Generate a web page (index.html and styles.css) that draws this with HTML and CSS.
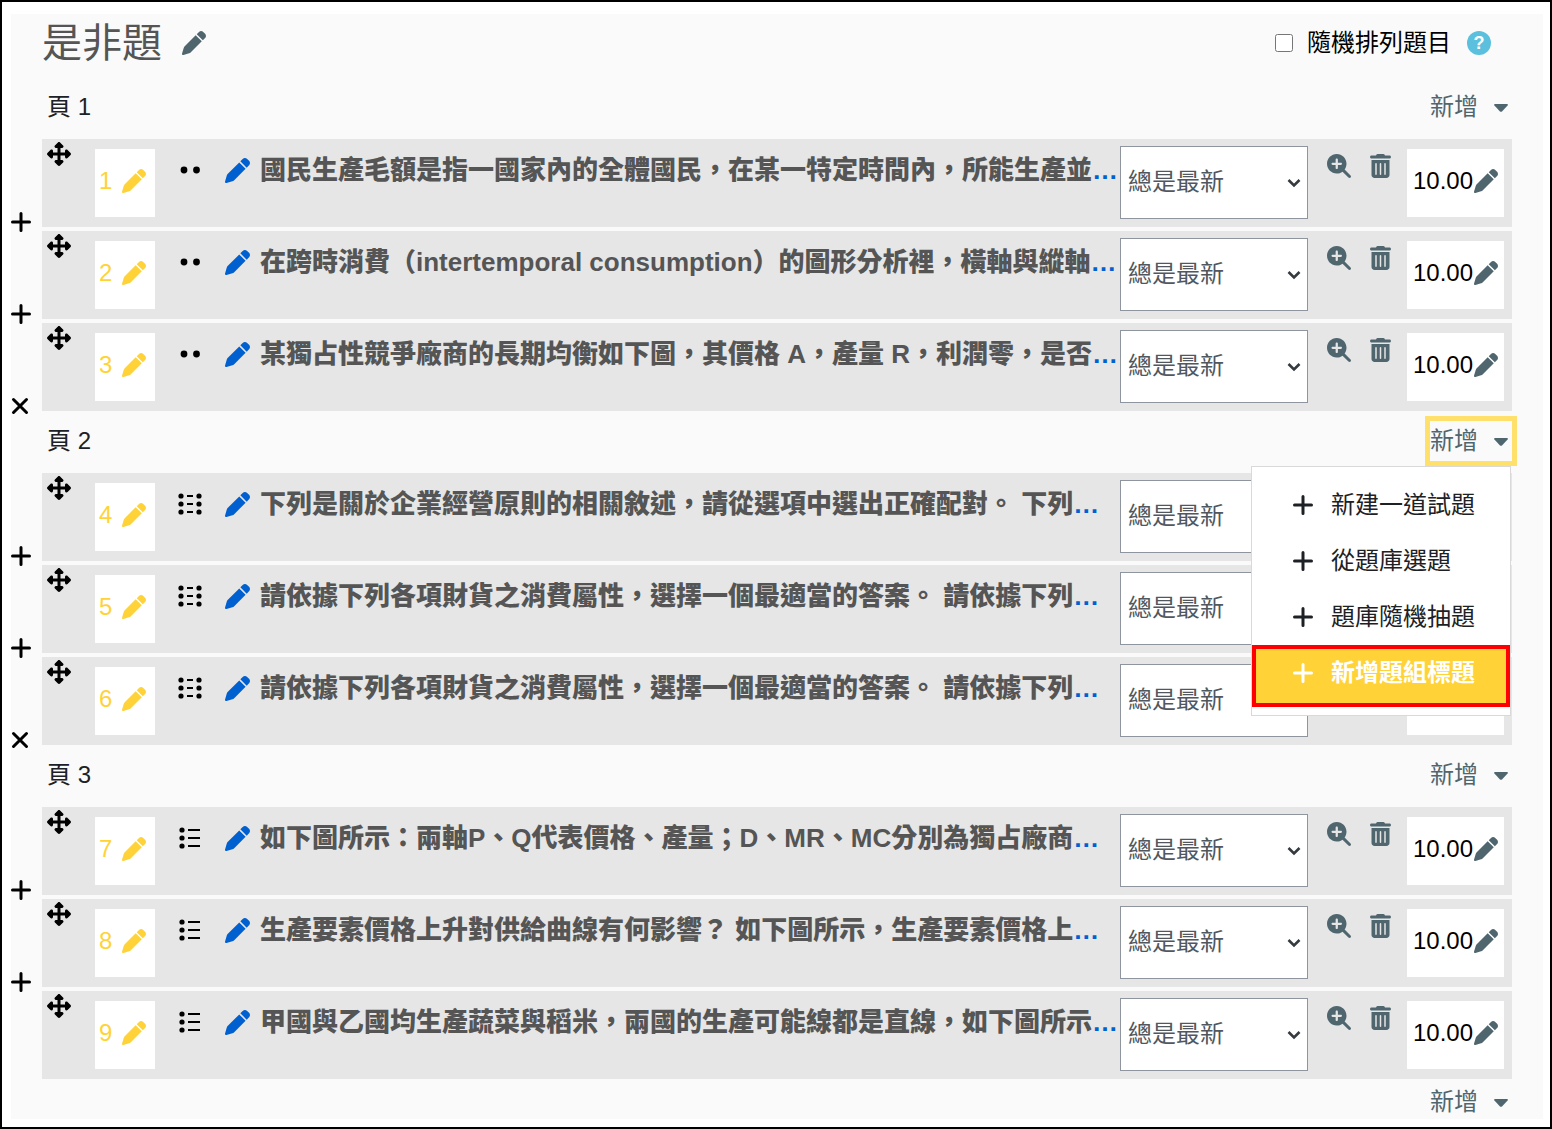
FILE: index.html
```html
<!DOCTYPE html>
<html lang="zh-Hant">
<head>
<meta charset="utf-8">
<title>是非題</title>
<link rel="stylesheet" href="styles.css">
</head>
<body>
<svg class="sprite" aria-hidden="true">
  <symbol id="pen" viewBox="0 0 512 512"><path d="M362.7 19.3L314.3 67.7 444.3 197.7l48.4-48.4c25-25 25-65.5 0-90.5L453.3 19.3c-25-25-65.5-25-90.5 0zm-71 71L58.6 323.5c-10.4 10.4-18 23.3-22.2 37.4L1 481.2C-1.5 489.7 .8 498.8 7 505s15.3 8.5 23.7 6.1l120.3-35.4c14.1-4.2 27-11.8 37.4-22.2L421.7 220.3 291.7 90.3z"/></symbol>
  <symbol id="zoom" viewBox="0 0 512 512"><path d="M416 208c0 45.9-14.9 88.3-40 122.7L502.6 457.4c12.5 12.5 12.5 32.8 0 45.3s-32.8 12.5-45.3 0L330.7 376c-34.4 25.2-76.8 40-122.7 40C93.1 416 0 322.9 0 208S93.1 0 208 0S416 93.1 416 208zM184 296c0 13.3 10.7 24 24 24s24-10.7 24-24V232h64c13.3 0 24-10.7 24-24s-10.7-24-24-24H232V120c0-13.3-10.7-24-24-24s-24 10.7-24 24v64H120c-13.3 0-24 10.7-24 24s10.7 24 24 24h64v64z"/></symbol>
  <symbol id="trash" viewBox="0 0 448 512"><path d="M135.2 17.7C140.6 6.8 151.7 0 163.8 0H284.2c12.1 0 23.2 6.8 28.6 17.7L320 32h96c17.7 0 32 14.3 32 32s-14.3 32-32 32H32C14.3 96 0 81.7 0 64S14.3 32 32 32h96l7.2-14.3zM32 128H416V448c0 35.3-28.7 64-64 64H96c-35.3 0-64-28.7-64-64V128zm96 64c-8.8 0-16 7.2-16 16V432c0 8.8 7.2 16 16 16s16-7.2 16-16V208c0-8.8-7.2-16-16-16zm96 0c-8.8 0-16 7.2-16 16V432c0 8.8 7.2 16 16 16s16-7.2 16-16V208c0-8.8-7.2-16-16-16zm96 0c-8.8 0-16 7.2-16 16V432c0 8.8 7.2 16 16 16s16-7.2 16-16V208c0-8.8-7.2-16-16-16z"/></symbol>
  <symbol id="move" viewBox="0 0 512 512"><path d="M278.6 9.4c-12.5-12.5-32.8-12.5-45.3 0l-64 64c-9.2 9.2-11.9 22.9-6.9 34.9s16.6 19.8 29.6 19.8h32v96H128V192c0-12.9-7.8-24.6-19.8-29.6s-25.7-2.2-34.9 6.9l-64 64c-12.5 12.5-12.5 32.8 0 45.3l64 64c9.2 9.2 22.9 11.9 34.9 6.9s19.8-16.6 19.8-29.6V288h96v96H192c-12.9 0-24.6 7.8-29.6 19.8s-2.2 25.7 6.9 34.9l64 64c12.5 12.5 32.8 12.5 45.3 0l64-64c9.2-9.2 11.9-22.9 6.9-34.9s-16.6-19.8-29.6-19.8H288V288h96v32c0 12.9 7.8 24.6 19.8 29.6s25.7 2.2 34.9-6.9l64-64c12.5-12.5 12.5-32.8 0-45.3l-64-64c-9.2-9.2-22.9-11.9-34.9-6.9s-19.8 16.6-19.8 29.6v32H288V128h32c12.9 0 24.6-7.8 29.6-19.8s2.2-25.7-6.9-34.9l-64-64z"/></symbol>
  <symbol id="plus" viewBox="0 0 20 20"><path d="M10 1.500v17M1.500 10h17" fill="none" stroke="currentColor" stroke-width="3" stroke-linecap="round"/></symbol>
  <symbol id="cross" viewBox="0 0 20 20"><path d="M2.500 3.500l13 13M15.500 3.500l-13 13" fill="none" stroke="currentColor" stroke-width="3" stroke-linecap="round"/></symbol>
  <symbol id="caret" viewBox="0 0 14 8"><path d="M1 0h12q1.4 .4 .6 1.6L8 7.4q-1 .8-2 0L.4 1.6Q-.4 .4 1 0z"/></symbol>
  <symbol id="chevron" viewBox="0 0 14 10"><path d="M1.500 2l5.500 5.500 5.500-5.500" fill="none" stroke="currentColor" stroke-width="2.6"/></symbol>
  <symbol id="truefalse" viewBox="0 0 24 24"><circle cx="6" cy="12" r="3.4"/><circle cx="18.500" cy="12" r="3.400"/></symbol>
  <symbol id="match" viewBox="0 0 24 24"><circle cx="3" cy="4" r="2.6"/><circle cx="3" cy="12" r="2.6"/><circle cx="3" cy="20" r="2.6"/><circle cx="21" cy="4" r="2.6"/><circle cx="21" cy="12" r="2.6"/><circle cx="21" cy="20" r="2.6"/><path d="M9 3h6v2H9zM9 11h6v2H9zM9 19h6v2H9z"/></symbol>
  <symbol id="multichoice" viewBox="0 0 24 24"><circle cx="4" cy="4" r="2.6"/><circle cx="4" cy="12" r="2.6"/><circle cx="4" cy="20" r="2.6"/><path d="M10 3h12v2H10zM10 11h12v2H10zM10 19h12v2H10z"/></symbol>
</svg>

<main class="frame">
<section class="quiz">
  <header class="quiz-head">
    <h1>是非題</h1>
    <button class="icon-btn" aria-label="編輯標題"><svg class="i"><use href="#pen"/></svg></button>
    <div class="shuffle">
      <input type="checkbox" id="shuffle"><label for="shuffle">隨機排列題目</label>
      <button class="help">?</button>
    </div>
  </header>

  <div class="page-head"><h2>頁 1</h2><button class="add">新增<svg><use href="#caret"/></svg></button></div>
  <ul class="questions">
    <li>
      <button class="split" aria-label="新增分頁"><svg><use href="#plus"/></svg></button>
      <div class="question">
        <button class="move" aria-label="移動"><svg class="i"><use href="#move"/></svg></button>
        <a class="number" href="#q1">1<svg class="i"><use href="#pen"/></svg></a>
        <div class="name"><svg class="i"><use href="#truefalse"/></svg><a href="#q1"><svg class="i"><use href="#pen"/></svg><span><b>國民生產毛額是指一國家內的全體國民，在某一特定時間內，所能生產並</b>…</span></a></div>
        <div class="version"><select aria-label="版本"><option>總是最新</option></select><svg><use href="#chevron"/></svg></div>
        <div class="tools"><button class="icon-btn" aria-label="預覽"><svg class="i"><use href="#zoom"/></svg></button><button class="icon-btn" aria-label="刪除"><svg class="i trash"><use href="#trash"/></svg></button></div>
        <a class="score" href="#q1">10.00<svg class="i"><use href="#pen"/></svg></a>
      </div>
    </li>
    <li>
      <button class="split" aria-label="新增分頁"><svg><use href="#plus"/></svg></button>
      <div class="question">
        <button class="move" aria-label="移動"><svg class="i"><use href="#move"/></svg></button>
        <a class="number" href="#q2">2<svg class="i"><use href="#pen"/></svg></a>
        <div class="name"><svg class="i"><use href="#truefalse"/></svg><a href="#q2"><svg class="i"><use href="#pen"/></svg><span><b>在跨時消費（intertemporal consumption）的圖形分析裡，橫軸與縱軸</b>…</span></a></div>
        <div class="version"><select aria-label="版本"><option>總是最新</option></select><svg><use href="#chevron"/></svg></div>
        <div class="tools"><button class="icon-btn" aria-label="預覽"><svg class="i"><use href="#zoom"/></svg></button><button class="icon-btn" aria-label="刪除"><svg class="i trash"><use href="#trash"/></svg></button></div>
        <a class="score" href="#q2">10.00<svg class="i"><use href="#pen"/></svg></a>
      </div>
    </li>
    <li>
      <button class="split" aria-label="移除分頁"><svg><use href="#cross"/></svg></button>
      <div class="question">
        <button class="move" aria-label="移動"><svg class="i"><use href="#move"/></svg></button>
        <a class="number" href="#q3">3<svg class="i"><use href="#pen"/></svg></a>
        <div class="name"><svg class="i"><use href="#truefalse"/></svg><a href="#q3"><svg class="i"><use href="#pen"/></svg><span><b>某獨占性競爭廠商的長期均衡如下圖，其價格 A，產量 R，利潤零，是否</b>…</span></a></div>
        <div class="version"><select aria-label="版本"><option>總是最新</option></select><svg><use href="#chevron"/></svg></div>
        <div class="tools"><button class="icon-btn" aria-label="預覽"><svg class="i"><use href="#zoom"/></svg></button><button class="icon-btn" aria-label="刪除"><svg class="i trash"><use href="#trash"/></svg></button></div>
        <a class="score" href="#q3">10.00<svg class="i"><use href="#pen"/></svg></a>
      </div>
    </li>
  </ul>

  <div class="page-head"><h2>頁 2</h2>
    <div class="dropdown">
      <button class="add open" aria-expanded="true">新增<svg><use href="#caret"/></svg></button>
      <div class="menu">
        <a href="#new"><svg><use href="#plus"/></svg>新建一道試題</a>
        <a href="#bank"><svg><use href="#plus"/></svg>從題庫選題</a>
        <a href="#random"><svg><use href="#plus"/></svg>題庫隨機抽題</a>
        <a class="active" href="#heading"><svg><use href="#plus"/></svg>新增題組標題</a>
      </div>
    </div>
  </div>
  <ul class="questions">
    <li>
      <button class="split" aria-label="新增分頁"><svg><use href="#plus"/></svg></button>
      <div class="question">
        <button class="move" aria-label="移動"><svg class="i"><use href="#move"/></svg></button>
        <a class="number" href="#q4">4<svg class="i"><use href="#pen"/></svg></a>
        <div class="name"><svg class="i"><use href="#match"/></svg><a href="#q4"><svg class="i"><use href="#pen"/></svg><span><b>下列是關於企業經營原則的相關敘述，請從選項中選出正確配對。 <strong>下列</strong></b>…</span></a></div>
        <div class="version"><select aria-label="版本"><option>總是最新</option></select><svg><use href="#chevron"/></svg></div>
        <div class="tools"><button class="icon-btn" aria-label="預覽"><svg class="i"><use href="#zoom"/></svg></button><button class="icon-btn" aria-label="刪除"><svg class="i trash"><use href="#trash"/></svg></button></div>
        <a class="score" href="#q4">10.00<svg class="i"><use href="#pen"/></svg></a>
      </div>
    </li>
    <li>
      <button class="split" aria-label="新增分頁"><svg><use href="#plus"/></svg></button>
      <div class="question">
        <button class="move" aria-label="移動"><svg class="i"><use href="#move"/></svg></button>
        <a class="number" href="#q5">5<svg class="i"><use href="#pen"/></svg></a>
        <div class="name"><svg class="i"><use href="#match"/></svg><a href="#q5"><svg class="i"><use href="#pen"/></svg><span><b>請依據下列各項財貨之消費屬性，選擇一個最適當的答案。 <strong>請依據下列</strong></b>…</span></a></div>
        <div class="version"><select aria-label="版本"><option>總是最新</option></select><svg><use href="#chevron"/></svg></div>
        <div class="tools"><button class="icon-btn" aria-label="預覽"><svg class="i"><use href="#zoom"/></svg></button><button class="icon-btn" aria-label="刪除"><svg class="i trash"><use href="#trash"/></svg></button></div>
        <a class="score" href="#q5">10.00<svg class="i"><use href="#pen"/></svg></a>
      </div>
    </li>
    <li>
      <button class="split" aria-label="移除分頁"><svg><use href="#cross"/></svg></button>
      <div class="question">
        <button class="move" aria-label="移動"><svg class="i"><use href="#move"/></svg></button>
        <a class="number" href="#q6">6<svg class="i"><use href="#pen"/></svg></a>
        <div class="name"><svg class="i"><use href="#match"/></svg><a href="#q6"><svg class="i"><use href="#pen"/></svg><span><b>請依據下列各項財貨之消費屬性，選擇一個最適當的答案。 <strong>請依據下列</strong></b>…</span></a></div>
        <div class="version"><select aria-label="版本"><option>總是最新</option></select><svg><use href="#chevron"/></svg></div>
        <div class="tools"><button class="icon-btn" aria-label="預覽"><svg class="i"><use href="#zoom"/></svg></button><button class="icon-btn" aria-label="刪除"><svg class="i trash"><use href="#trash"/></svg></button></div>
        <a class="score" href="#q6">10.00<svg class="i"><use href="#pen"/></svg></a>
      </div>
    </li>
  </ul>

  <div class="page-head"><h2>頁 3</h2><button class="add">新增<svg><use href="#caret"/></svg></button></div>
  <ul class="questions">
    <li>
      <button class="split" aria-label="新增分頁"><svg><use href="#plus"/></svg></button>
      <div class="question">
        <button class="move" aria-label="移動"><svg class="i"><use href="#move"/></svg></button>
        <a class="number" href="#q7">7<svg class="i"><use href="#pen"/></svg></a>
        <div class="name"><svg class="i"><use href="#multichoice"/></svg><a href="#q7"><svg class="i"><use href="#pen"/></svg><span><b>如下圖所示：兩軸P、Q代表價格、產量；D、MR、MC分別為獨占廠商</b>…</span></a></div>
        <div class="version"><select aria-label="版本"><option>總是最新</option></select><svg><use href="#chevron"/></svg></div>
        <div class="tools"><button class="icon-btn" aria-label="預覽"><svg class="i"><use href="#zoom"/></svg></button><button class="icon-btn" aria-label="刪除"><svg class="i trash"><use href="#trash"/></svg></button></div>
        <a class="score" href="#q7">10.00<svg class="i"><use href="#pen"/></svg></a>
      </div>
    </li>
    <li>
      <button class="split" aria-label="新增分頁"><svg><use href="#plus"/></svg></button>
      <div class="question">
        <button class="move" aria-label="移動"><svg class="i"><use href="#move"/></svg></button>
        <a class="number" href="#q8">8<svg class="i"><use href="#pen"/></svg></a>
        <div class="name"><svg class="i"><use href="#multichoice"/></svg><a href="#q8"><svg class="i"><use href="#pen"/></svg><span><b>生產要素價格上升對供給曲線有何影響？ <strong>如下圖所示，生產要素價格上</strong></b>…</span></a></div>
        <div class="version"><select aria-label="版本"><option>總是最新</option></select><svg><use href="#chevron"/></svg></div>
        <div class="tools"><button class="icon-btn" aria-label="預覽"><svg class="i"><use href="#zoom"/></svg></button><button class="icon-btn" aria-label="刪除"><svg class="i trash"><use href="#trash"/></svg></button></div>
        <a class="score" href="#q8">10.00<svg class="i"><use href="#pen"/></svg></a>
      </div>
    </li>
    <li>
      <div class="question">
        <button class="move" aria-label="移動"><svg class="i"><use href="#move"/></svg></button>
        <a class="number" href="#q9">9<svg class="i"><use href="#pen"/></svg></a>
        <div class="name"><svg class="i"><use href="#multichoice"/></svg><a href="#q9"><svg class="i"><use href="#pen"/></svg><span><b>甲國與乙國均生產蔬菜與稻米，兩國的生產可能線都是直線，如下圖所示</b>…</span></a></div>
        <div class="version"><select aria-label="版本"><option>總是最新</option></select><svg><use href="#chevron"/></svg></div>
        <div class="tools"><button class="icon-btn" aria-label="預覽"><svg class="i"><use href="#zoom"/></svg></button><button class="icon-btn" aria-label="刪除"><svg class="i trash"><use href="#trash"/></svg></button></div>
        <a class="score" href="#q9">10.00<svg class="i"><use href="#pen"/></svg></a>
      </div>
    </li>
  </ul>

  <footer class="quiz-foot"><button class="add">新增<svg><use href="#caret"/></svg></button></footer>
</section>
</main>
</body>
</html>
```
FILE: styles.css
```css
* { box-sizing: border-box; }

body {
  margin: 0;
  background: #fff;
  color: #1d2125;
  font: 24px/32px "Liberation Sans", "Noto Sans CJK TC", sans-serif;
}

button, select, input { font: inherit; color: inherit; margin: 0; }
button { padding: 0; border: 0; background: none; cursor: pointer; }
a { color: inherit; text-decoration: none; }
svg { display: block; flex: none; fill: currentColor; }

.sprite { position: absolute; width: 0; height: 0; }
.i { width: 24px; height: 24px; }
.icon-btn { color: #50666f; }

.frame {
  min-height: 100vh;
  padding: 12px 7px 8px 9px;
  border: 2px solid #000;
}

.quiz {
  padding-right: 31px;
  background: #fafafa;
}

/* Section title */
.quiz-head {
  display: flex;
  align-items: center;
  gap: 20px;
  padding: 1px 21px 6px 31px;
}
.quiz-head h1 {
  margin: 0;
  color: #555;
  font-size: 40px;
  font-weight: 400;
  line-height: 56px;
}
.shuffle {
  display: flex;
  align-items: center;
  margin-left: auto;
  color: #000;
}
.shuffle input { width: 18px; height: 18px; margin-right: 14px; }
.help {
  width: 24px;
  height: 24px;
  margin-left: 16px;
  border-radius: 50%;
  background: #5bc0de;
  color: #fff;
  font-size: 18px;
  font-weight: 700;
  line-height: 24px;
}

/* Page headings and the add menu */
.page-head {
  display: flex;
  justify-content: space-between;
  height: 62px;
  padding: 10px 0 0 36px;
}
.page-head h2 {
  margin: 0;
  font-size: 24px;
  font-weight: 400;
  line-height: 40px;
}
.add {
  display: flex;
  align-items: center;
  gap: 16px;
  height: 40px;
  padding-right: 4px;
  color: #50666f;
}
.add svg { width: 14px; height: 8px; margin-top: 2px; }
.add.open { box-shadow: 0 0 0 5px #ffe06a; }

.dropdown { position: relative; }
.menu {
  position: absolute;
  z-index: 1;
  top: 45px;
  right: 1px;
  width: 260px;
  padding: 10px 0 8px;
  border: 1px solid #d9d9d9;
  background: #fff;
}
.menu a {
  display: flex;
  align-items: center;
  gap: 18px;
  height: 56px;
  padding-left: 41px;
  white-space: nowrap;
}
.menu svg { width: 20px; height: 20px; }
.menu .active {
  height: 62px;
  padding: 0 0 6px 37px;
  border: 4px solid #f00;
  background: #ffd338;
  color: #fff;
  font-weight: 700;
}

.quiz-foot {
  display: flex;
  justify-content: flex-end;
}
.quiz-foot .add { padding-top: 5px; }

/* Question rows */
.questions {
  display: grid;
  gap: 4px;
  margin: 0;
  padding: 0;
  list-style: none;
}
.questions li {
  display: grid;
  grid-template-columns: 31px minmax(0, 1fr);
}
.split {
  align-self: end;
  margin-bottom: -5px;
  color: #000;
}
.split svg { width: 20px; height: 20px; }
.question {
  grid-column: 2;
  display: grid;
  grid-template-columns: 48px 60px minmax(0, 1fr) 188px 99px 97px;
  align-items: start;
  height: 88px;
  padding: 0 8px 0 5px;
  background: #e6e6e6;
}
.move { padding-top: 3px; color: #000; }
.number, .score {
  display: flex;
  align-items: center;
  height: 68px;
  margin-top: 10px;
  padding-bottom: 4px;
  background: #fff;
}
.number { gap: 10px; padding-left: 4px; color: #ffd338; }
.score { gap: 1px; padding-left: 6px; color: #000; }
.score svg { color: #50666f; }

.name {
  display: flex;
  align-items: center;
  gap: 23px;
  padding: 12px 0 0 23px;
  color: #000;
}
.name a {
  display: flex;
  align-items: center;
  min-width: 0;
  overflow: hidden;
  color: #0060d0;
  font-size: 26px;
  font-weight: 700;
  line-height: 38px;
  white-space: nowrap;
}
.name a svg { width: 25px; height: 25px; margin-right: 10px; }
.name b { color: #555; }

.version { position: relative; margin-top: 7px; }
.version select {
  appearance: none;
  width: 100%;
  height: 73px;
  padding: 0 30px 2px 7px;
  border: 1px solid #8f959e;
  border-radius: 0;
  background: #fff;
  color: #50575e;
}
.version svg {
  position: absolute;
  top: 32px;
  right: 7px;
  width: 14px;
  height: 10px;
  color: #343a40;
  pointer-events: none;
}

.tools {
  display: flex;
  gap: 19px;
  padding: 15px 0 0 19px;
}
.i.trash { width: 21px; }
```
